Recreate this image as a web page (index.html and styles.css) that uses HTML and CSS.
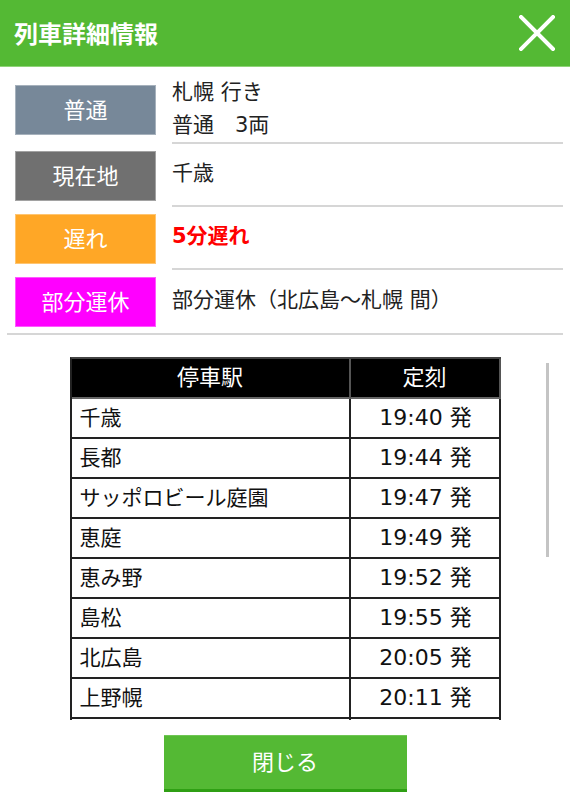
FILE: index.html
```html
<!DOCTYPE html>
<html lang="ja">
<head>
<meta charset="utf-8">
<title>列車詳細情報</title>
<link rel="stylesheet" href="styles.css">
</head>
<body>
<div class="page">
  <header class="header">
    <h1 class="title">列車詳細情報</h1>
    <button class="close-x" aria-label="閉じる">
      <svg width="36" height="36" viewBox="0 0 36 36"><path d="M2 2 L34 34 M34 2 L2 34" stroke="#fff" stroke-width="4" stroke-linecap="square" fill="none"/></svg>
    </button>
  </header>

  <section class="info">
    <div class="row">
      <div class="label label-type">普通</div>
      <div class="value value-multi"><span>札幌 行き</span><span>普通　3両</span></div>
    </div>
    <div class="row">
      <div class="label label-pos">現在地</div>
      <div class="value">千歳</div>
    </div>
    <div class="row">
      <div class="label label-delay">遅れ</div>
      <div class="value delay">5分遅れ</div>
    </div>
    <div class="row">
      <div class="label label-partial">部分運休</div>
      <div class="value value-last">部分運休（北広島～札幌 間）</div>
    </div>
  </section>

  <div class="scroll">
    <div class="scroll-inner">
      <table class="stops">
        <thead>
          <tr><th class="c-st">停車駅</th><th class="c-tm">定刻</th></tr>
        </thead>
        <tbody>
          <tr><td class="c-st">千歳</td><td class="c-tm">19:40 発</td></tr>
          <tr><td class="c-st">長都</td><td class="c-tm">19:44 発</td></tr>
          <tr><td class="c-st">サッポロビール庭園</td><td class="c-tm">19:47 発</td></tr>
          <tr><td class="c-st">恵庭</td><td class="c-tm">19:49 発</td></tr>
          <tr><td class="c-st">恵み野</td><td class="c-tm">19:52 発</td></tr>
          <tr><td class="c-st">島松</td><td class="c-tm">19:55 発</td></tr>
          <tr><td class="c-st">北広島</td><td class="c-tm">20:05 発</td></tr>
          <tr><td class="c-st">上野幌</td><td class="c-tm">20:11 発</td></tr>
          <tr class="more"><td class="c-st"></td><td class="c-tm"></td></tr>
        </tbody>
      </table>
    </div>
    <div class="thumb"></div>
  </div>

  <div class="actions">
    <button class="close-btn">閉じる</button>
  </div>
</div>
</body>
</html>
```
FILE: styles.css
```css
* { box-sizing: border-box; }
html, body { margin: 0; padding: 0; background: #fff; }
body {
  font-family: "DejaVu Sans", "Noto Sans CJK JP", sans-serif;
  color: #222;
  width: 570px;
  height: 803px;
  overflow: hidden;
}
.page { width: 570px; height: 803px; display: flex; flex-direction: column; }

.header {
  height: 67px;
  background: #54b934;
  border-bottom: 1px solid #8fd478;
  display: flex;
  align-items: center;
  justify-content: space-between;
  padding: 0 15px 0 14px;
  flex: none;
}
.title {
  margin: 0;
  color: #fff;
  font-family: "Noto Sans CJK JP", sans-serif;
  font-size: 24px;
  font-weight: 700;
  line-height: 1;
}
.close-x {
  background: none;
  border: 0;
  padding: 0;
  width: 36px;
  height: 36px;
  display: block;
}
.close-x svg { display: block; }

.info {
  padding: 9px 0 0 8px;
  margin: 0 7px;
  border-bottom: 2px solid #d6d6d6;
  flex: none;
}
.row {
  display: flex;
  align-items: center;
  min-height: 63px;
}
.label {
  width: 141px;
  height: 50px;
  flex: none;
  display: flex;
  align-items: center;
  justify-content: center;
  color: #fff;
  font-family: "Noto Sans CJK JP", sans-serif;
  font-size: 22px;
  line-height: 1;
  padding-bottom: 4px;
  border: 1px solid rgba(255,255,255,0.35);
}
.label-type { background: #778899; }
.label-pos { background: #707070; }
.label-delay { background: #ffa726; }
.label-partial { background: #ff00ff; }

.value {
  align-self: stretch;
  flex: 1;
  margin-left: 16px;
  display: flex;
  align-items: center;
  font-size: 21px;
  line-height: 33px;
  padding-bottom: 2px;
  border-bottom: 2px solid #d6d6d6;
  color: #222;
}
.value-multi { flex-direction: column; align-items: flex-start; justify-content: center; padding-bottom: 0; }
.value-last { border-bottom: 0; }
.delay { color: #ff0000; font-weight: 700; }

.scroll {
  position: relative;
  height: 385px;
  overflow: hidden;
  flex: none;
}
.scroll-inner {
  padding-top: 22px;
  display: flex;
  justify-content: center;
}
.stops {
  width: 431px;
  border-collapse: separate;
  border-spacing: 0;
  border-left: 2px solid #222;
  border-top: 2px solid #444;
  font-size: 21px;
}
.stops th, .stops td {
  padding: 0;
  height: 40px;
  line-height: 38px;
  border-right: 2px solid #222;
  border-bottom: 2px solid #222;
  font-weight: 400;
}
.stops th {
  background: #000;
  color: #fff;
  text-align: center;
  font-size: 22px;
  border-right-color: #555;
  border-bottom-color: #666;
}
.stops td { color: #111; }
.stops td.c-st { padding-left: 8px; text-align: left; }
.stops .c-st { width: 279px; }
.stops td.c-tm { text-align: center; padding-left: 2px; font-size: 22px; }

.thumb {
  position: absolute;
  right: 21px;
  top: 28px;
  width: 3px;
  height: 194px;
  background: #c4c4c4;
}

.actions {
  display: flex;
  justify-content: center;
  padding-top: 15px;
  flex: none;
}
.close-btn {
  width: 243px;
  height: 57px;
  background: #54b934;
  border: 0;
  border-top: 1px solid #6fc654;
  border-bottom: 3px solid #2f9f14;
  color: #fff;
  font-family: "Noto Sans CJK JP", sans-serif;
  font-size: 22px;
  line-height: 1;
  padding: 0 0 6px 0;
}
```
